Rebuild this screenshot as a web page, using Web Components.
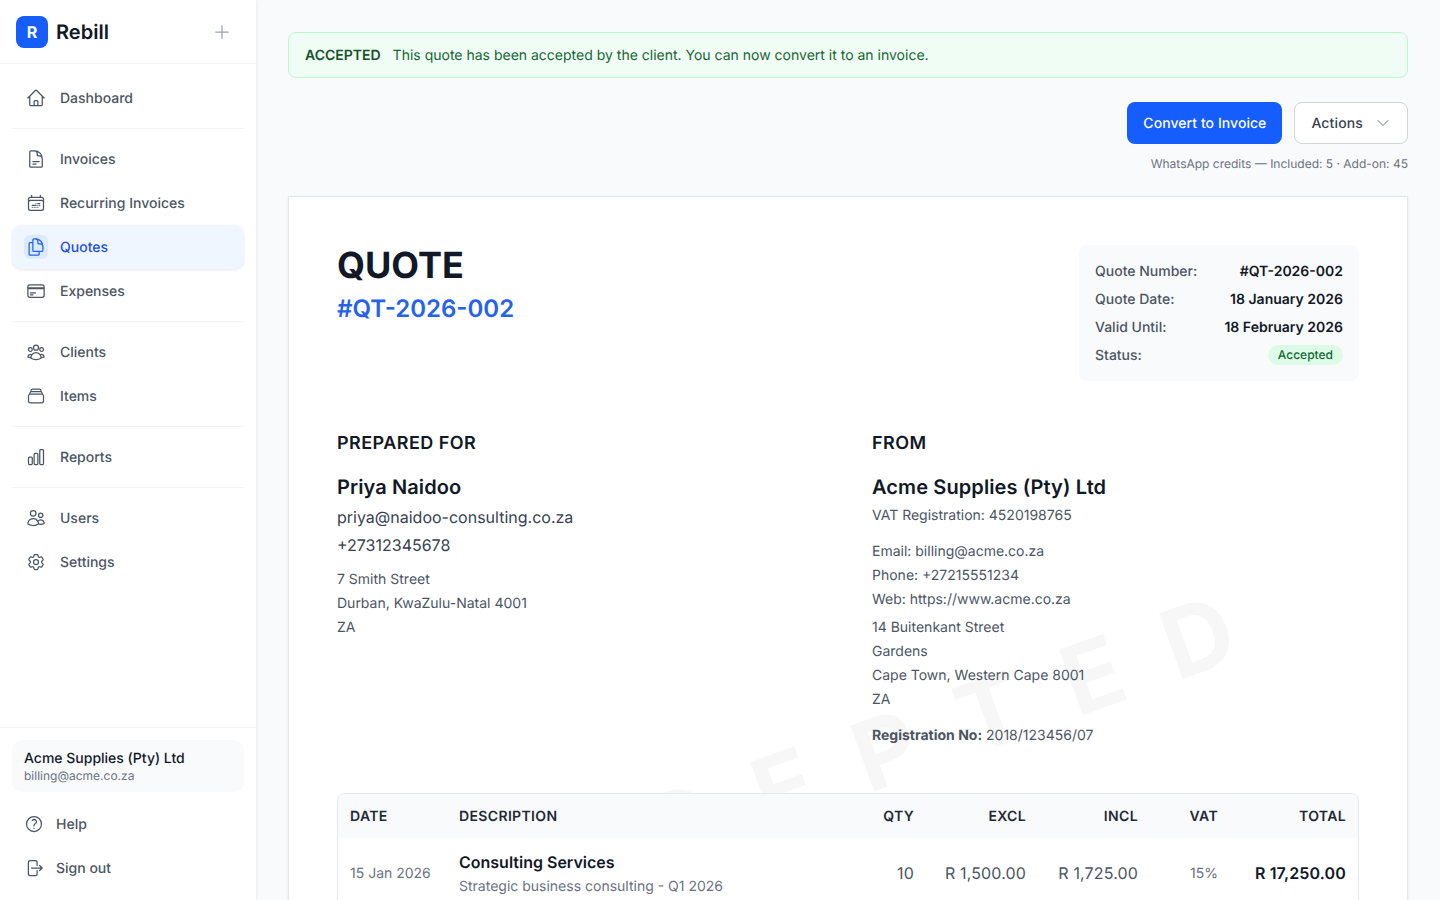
<!DOCTYPE html>
<html lang="en"><head><meta charset="utf-8"><title>Quote</title>
<style>
html,body{margin:0;height:100%;overflow:hidden;background:#f9fafb;font-family:Inter,"Liberation Sans",sans-serif;color:#111827;text-rendering:geometricPrecision;line-height:1.5}
</style></head><body>
<rb-app></rb-app>
<script>
const P={
home:"m2.25 12 8.954-8.955c.44-.439 1.152-.439 1.591 0L21.75 12M4.5 9.75v10.125c0 .621.504 1.125 1.125 1.125H9.75v-4.875c0-.621.504-1.125 1.125-1.125h2.25c.621 0 1.125.504 1.125 1.125V21h4.125c.621 0 1.125-.504 1.125-1.125V9.75M8.25 21h8.25",
doc:"M19.5 14.25v-2.625a3.375 3.375 0 0 0-3.375-3.375h-1.5A1.125 1.125 0 0 1 13.5 7.125v-1.5a3.375 3.375 0 0 0-3.375-3.375H8.25m0 12.75h7.5m-7.5 3H12M10.5 2.25H5.625c-.621 0-1.125.504-1.125 1.125v17.25c0 .621.504 1.125 1.125 1.125h12.75c.621 0 1.125-.504 1.125-1.125V11.25a9 9 0 0 0-9-9Z",
cal:"M6.75 2.994v2.25m10.5-2.25v2.25m-14.252 13.5V7.491a2.25 2.25 0 0 1 2.25-2.25h13.5a2.25 2.25 0 0 1 2.25 2.25v11.251m-18 0a2.25 2.25 0 0 0 2.25 2.25h13.5a2.25 2.25 0 0 0 2.25-2.25m-18 0v-7.5a2.25 2.25 0 0 1 2.25-2.25h13.5a2.25 2.25 0 0 1 2.25 2.25v7.5m-6.75-6h2.25m-9 2.25h4.5m.002-2.25h.005v.006H12v-.006Zm-.001 4.5h.006v.006h-.006v-.005Zm-2.25.001h.005v.006H9.75v-.006Zm-2.25 0h.005v.005h-.006v-.005Zm6.75-2.247h.005v.005h-.005v-.005Zm0 2.247h.006v.006h-.006v-.006Zm2.25-2.248h.006V15H16.5v-.005Z",
dup:"M15.75 17.25v3.375c0 .621-.504 1.125-1.125 1.125h-9.75a1.125 1.125 0 0 1-1.125-1.125V7.875c0-.621.504-1.125 1.125-1.125H6.75a9.06 9.06 0 0 1 1.5.124m7.5 10.376h3.375c.621 0 1.125-.504 1.125-1.125V11.25c0-4.46-3.243-8.161-7.5-8.876a9.06 9.06 0 0 0-1.5-.124H9.375c-.621 0-1.125.504-1.125 1.125v3.5m7.5 10.375H9.375a1.125 1.125 0 0 1-1.125-1.125v-9.25m12 6.625v-1.875a3.375 3.375 0 0 0-3.375-3.375h-1.5a1.125 1.125 0 0 1-1.125-1.125v-1.5a3.375 3.375 0 0 0-3.375-3.375H9.75",
card:"M2.25 8.25h19.5M2.25 9h19.5m-16.5 5.25h6m-6 2.25h3m-3.75 3h15a2.25 2.25 0 0 0 2.25-2.25V6.75A2.25 2.25 0 0 0 19.5 4.5h-15a2.25 2.25 0 0 0-2.25 2.25v10.5A2.25 2.25 0 0 0 4.5 19.5Z",
group:"M18 18.72a9.094 9.094 0 0 0 3.741-.479 3 3 0 0 0-4.682-2.72m.94 3.198.001.031c0 .225-.012.447-.037.666A11.944 11.944 0 0 1 12 21c-2.17 0-4.207-.576-5.963-1.584A6.062 6.062 0 0 1 6 18.719m12 0a5.971 5.971 0 0 0-.941-3.197m0 0A5.995 5.995 0 0 0 12 12.75a5.995 5.995 0 0 0-5.058 2.772m0 0a3 3 0 0 0-4.681 2.72 8.986 8.986 0 0 0 3.74.477m.94-3.197a5.971 5.971 0 0 0-.94 3.197M15 6.75a3 3 0 1 1-6 0 3 3 0 0 1 6 0Zm6 2.25a2.25 2.25 0 1 1-4.5 0 2.25 2.25 0 0 1 4.5 0Zm-13.5 0a2.25 2.25 0 1 1-4.5 0 2.25 2.25 0 0 1 4.5 0Z",
stack:"M6 6.878V6a2.25 2.25 0 0 1 2.25-2.25h7.5A2.25 2.25 0 0 1 18 6v.878m-12 0c.235-.083.487-.128.75-.128h10.5c.263 0 .515.045.75.128m-12 0A2.25 2.25 0 0 0 4.5 9v.878m13.5-3A2.25 2.25 0 0 1 19.5 9v.878m0 0a2.246 2.246 0 0 0-.75-.128H5.25c-.263 0-.515.045-.75.128m15 0A2.25 2.25 0 0 1 21 12v6a2.25 2.25 0 0 1-2.25 2.25H5.25A2.25 2.25 0 0 1 3 18v-6c0-.98.626-1.813 1.5-2.122",
chart:"M3 13.125C3 12.504 3.504 12 4.125 12h2.25c.621 0 1.125.504 1.125 1.125v6.75C7.5 20.496 6.996 21 6.375 21h-2.25A1.125 1.125 0 0 1 3 19.875v-6.75ZM9.75 8.625c0-.621.504-1.125 1.125-1.125h2.25c.621 0 1.125.504 1.125 1.125v11.25c0 .621-.504 1.125-1.125 1.125h-2.25a1.125 1.125 0 0 1-1.125-1.125V8.625ZM16.5 4.125c0-.621.504-1.125 1.125-1.125h2.25C20.496 3 21 3.504 21 4.125v15.75c0 .621-.504 1.125-1.125 1.125h-2.25a1.125 1.125 0 0 1-1.125-1.125V4.125Z",
users:"M15 19.128a9.38 9.38 0 0 0 2.625.372 9.337 9.337 0 0 0 4.121-.952 4.125 4.125 0 0 0-7.533-2.493M15 19.128v-.003c0-1.113-.285-2.16-.786-3.07M15 19.128v.106A12.318 12.318 0 0 1 8.624 21c-2.331 0-4.512-.645-6.374-1.766l-.001-.109a6.375 6.375 0 0 1 11.964-3.07M12 6.375a3.375 3.375 0 1 1-6.75 0 3.375 3.375 0 0 1 6.75 0Zm8.25 2.25a2.625 2.625 0 1 1-5.25 0 2.625 2.625 0 0 1 5.25 0Z",
cog:"M9.594 3.94c.09-.542.56-.94 1.11-.94h2.593c.55 0 1.02.398 1.11.94l.213 1.281c.063.374.313.686.645.87.074.04.147.083.22.127.325.196.72.257 1.075.124l1.217-.456a1.125 1.125 0 0 1 1.37.49l1.296 2.247a1.125 1.125 0 0 1-.26 1.431l-1.003.827c-.293.241-.438.613-.43.992a7.723 7.723 0 0 1 0 .255c-.008.378.137.75.43.991l1.004.827c.424.35.534.955.26 1.43l-1.298 2.247a1.125 1.125 0 0 1-1.369.491l-1.217-.456c-.355-.133-.75-.072-1.076.124a6.47 6.47 0 0 1-.22.128c-.331.183-.581.495-.644.869l-.213 1.281c-.09.543-.56.94-1.11.94h-2.594c-.55 0-1.019-.398-1.11-.94l-.213-1.281c-.062-.374-.312-.686-.644-.87a6.52 6.52 0 0 1-.22-.127c-.325-.196-.72-.257-1.076-.124l-1.217.456a1.125 1.125 0 0 1-1.369-.49l-1.297-2.247a1.125 1.125 0 0 1 .26-1.431l1.004-.827c.292-.24.437-.613.43-.991a6.932 6.932 0 0 1 0-.255c.007-.38-.138-.751-.43-.992l-1.004-.827a1.125 1.125 0 0 1-.26-1.43l1.297-2.247a1.125 1.125 0 0 1 1.37-.491l1.216.456c.356.133.751.072 1.076-.124.072-.044.146-.086.22-.128.332-.183.582-.495.644-.869l.214-1.28Z M15 12a3 3 0 1 1-6 0 3 3 0 0 1 6 0Z",
help:"M9.879 7.519c1.171-1.025 3.071-1.025 4.242 0 1.172 1.025 1.172 2.687 0 3.712-.203.179-.43.326-.67.442-.745.361-1.45.999-1.45 1.827v.75M21 12a9 9 0 1 1-18 0 9 9 0 0 1 18 0Zm-9 5.25h.008v.008H12v-.008Z",
out:"M15.75 9V5.25A2.25 2.25 0 0 0 13.5 3h-6a2.25 2.25 0 0 0-2.25 2.25v13.5A2.25 2.25 0 0 0 7.5 21h6a2.25 2.25 0 0 0 2.25-2.25V15m3 0 3-3m0 0-3-3m3 3H9",
plus:"M12 4.5v15m7.5-7.5h-15",
chev:"m19.5 8.25-7.5 7.5-7.5-7.5"};
const ico=(n,s=20,w=1.5)=>`<svg width="${s}" height="${s}" viewBox="0 0 24 24" fill="none" stroke="currentColor" stroke-width="${w}" stroke-linecap="round" stroke-linejoin="round" aria-hidden="true"><path d="${P[n]}"/></svg>`;
function def(tag,css,html){customElements.define(tag,class extends HTMLElement{
  connectedCallback(){if(this.shadowRoot)return;const r=this.attachShadow({mode:"open"});
  r.innerHTML=`<style>${css}</style>`+(typeof html==="function"?html(this):html);}
});}
def("rb-nav-item",`
:host{display:block}
a{display:flex;align-items:center;gap:12px;height:44px;padding:0 12px;border-radius:10px;font-size:14px;line-height:20px;font-weight:500;color:#4b5563;text-decoration:none}
.t{padding-top:2px}
.i{width:24px;height:24px;display:flex;align-items:center;justify-content:center;border-radius:6px;flex:none}
:host([active]) a{background:#eff6ff;color:#1d4ed8;box-shadow:0 1px 3px rgba(17,24,39,.1)}
:host([active]) .i{background:#dbeafe;color:#2563eb}
:host([compact]) .i{width:20px;height:20px}
`,h=>`<a href="#"><span class="i">${ico(h.getAttribute("icon"),20)}</span><span class="t"><slot></slot></span></a>`);
def("rb-sidebar",`
:host{display:flex;flex-direction:column;width:256px;height:900px;box-sizing:border-box;background:#fff;box-shadow:1px 0 3px rgba(17,24,39,.06);flex:none;position:relative;z-index:2}
.brand{height:63px;border-bottom:1px solid #f3f4f6;display:flex;align-items:center;padding:0 16px;gap:8px;flex:none}
.logo{width:32px;height:32px;border-radius:8px;background:#155dfc;color:#fff;font-weight:700;font-size:16px;display:flex;align-items:center;justify-content:center}
.name{font-size:20px;font-weight:600;color:#111827;flex:1;letter-spacing:.05px}
.plus{color:#9ca3af;display:flex;margin-right:8px}
nav{flex:1;padding:12px 12px 0}
hr{border:0;border-top:1px solid #f3f4f6;margin:8px 0}
.foot{border-top:1px solid #f3f4f6;padding:12px 12px 10px;flex:none}
.org{background:#f9fafb;border-radius:10px;height:52px;box-sizing:border-box;padding:0 12px;display:flex;flex-direction:column;justify-content:center;margin-bottom:10px}
.org b{font-size:14px;font-weight:500;color:#111827;line-height:20px;margin:1px 0 -1px}
.org span{font-size:12px;color:#6b7280;line-height:16px}
`,`<div class="brand"><div class="logo">R</div><div class="name">Rebill</div><span class="plus">${ico("plus",20)}</span></div>
<nav>
<rb-nav-item icon="home">Dashboard</rb-nav-item><hr>
<rb-nav-item icon="doc">Invoices</rb-nav-item>
<rb-nav-item icon="cal">Recurring Invoices</rb-nav-item>
<rb-nav-item icon="dup" active>Quotes</rb-nav-item>
<rb-nav-item icon="card">Expenses</rb-nav-item><hr>
<rb-nav-item icon="group">Clients</rb-nav-item>
<rb-nav-item icon="stack">Items</rb-nav-item><hr>
<rb-nav-item icon="chart">Reports</rb-nav-item><hr>
<rb-nav-item icon="users">Users</rb-nav-item>
<rb-nav-item icon="cog">Settings</rb-nav-item>
</nav>
<div class="foot"><div class="org"><b>Acme Supplies (Pty) Ltd</b><span>billing@acme.co.za</span></div>
<rb-nav-item icon="help" compact>Help</rb-nav-item>
<rb-nav-item icon="out" compact>Sign out</rb-nav-item></div>`);
def("rb-banner",`
:host{display:flex;align-items:center;height:46px;box-sizing:border-box;padding:0 16px;gap:12px;background:#f0fdf4;border:1px solid #bbf7d0;border-radius:8px;font-size:14px;line-height:20px;color:#166534}
b,span{padding-top:2px}
b{font-weight:600;color:#14532d}
`,`<b>ACCEPTED</b><span>This quote has been accepted by the client. You can now convert it to an invoice.</span>`);
def("rb-toolbar",`
:host{display:block;margin-top:24px}
.btns{display:flex;justify-content:flex-end;gap:12px}
button{height:42px;box-sizing:border-box;border-radius:8px;font:500 14px/20px Inter,"Liberation Sans",sans-serif;text-rendering:geometricPrecision;display:flex;align-items:center;cursor:pointer}
button span{padding-top:2px}
.p{background:#155dfc;color:#fff;border:0;padding:0 16px;letter-spacing:.06px}
.s{background:#fff;color:#374151;border:1px solid #d1d5db;padding:0 16px;gap:12px;letter-spacing:.14px}
.s svg{color:#6b7280}
p{margin:12px 0 0;text-align:right;font-size:12px;line-height:16px;color:#6b7280}
`,`<div class="btns"><button class="p"><span>Convert to Invoice</span></button><button class="s"><span>Actions</span> ${ico("chev",16)}</button></div><p>WhatsApp credits — Included: 5 · Add-on: 45</p>`);
def("rb-meta",`
:host{display:block;width:280px;height:136px;box-sizing:border-box;padding:12px 16px;background:#f9fafb;border-radius:8px;flex:none}
div{display:flex;justify-content:space-between;align-items:center;height:28px;font-size:14px;line-height:20px;color:#4b5563}
span{font-weight:500;padding-top:2px}
b{font-weight:600;color:#111827;padding-top:2px}
i{font-style:normal;font-size:12px;font-weight:500;color:#166534;background:#dcfce7;border-radius:999px;padding:0 10px;line-height:20px;height:20px}
`,`<div><span>Quote Number:</span><b>#QT-2026-002</b></div><div><span>Quote Date:</span><b>18 January 2026</b></div><div><span>Valid Until:</span><b>18 February 2026</b></div><div><span>Status:</span><i>Accepted</i></div>`);
def("rb-parties",`
:host{display:grid;grid-template-columns:1fr 1fr;gap:48px;margin-top:49px;position:relative}
h3{margin:0 0 15px;font-size:18px;font-weight:600;line-height:28px;color:#111827;letter-spacing:.45px}
h4{margin:0 0 2px;font-size:20px;font-weight:600;line-height:28px;color:#111827;letter-spacing:.1px}
.l{font-size:16px;line-height:28px;color:#374151}
.s{font-size:14px;line-height:24px;color:#4b5563}
.a{margin-top:9px}
.v{margin-top:3px}
.g{margin-top:12px}
.f{margin-top:4px}
.r{margin-top:12px}
.r b{font-weight:700}
`,`<div><h3>PREPARED FOR</h3><h4>Priya Naidoo</h4><div class="l">priya@naidoo-consulting.co.za</div><div class="l">+27312345678</div>
<div class="s a">7 Smith Street<br>Durban, KwaZulu-Natal 4001<br>ZA</div></div>
<div><h3>FROM</h3><h4>Acme Supplies (Pty) Ltd</h4><div class="s v">VAT Registration: 4520198765</div>
<div class="s g">Email: billing@acme.co.za<br>Phone: +27215551234<br>Web: https://www.acme.co.za</div>
<div class="s f">14 Buitenkant Street<br>Gardens<br>Cape Town, Western Cape 8001<br>ZA</div>
<div class="s r"><b>Registration No:</b> 2018/123456/07</div></div>`);
def("rb-items",`
:host{display:block;margin-top:45px;position:relative;background:#fff;border:1px solid #e5e7eb;border-radius:8px;overflow:hidden;font-size:14px;line-height:20px}
table{border-collapse:collapse;width:100%;table-layout:fixed}
th{height:44px;box-sizing:border-box;padding:2px 12px 0;background:#f9fafb;font-weight:600;color:#1f2937;text-align:left;letter-spacing:.35px;font-size:14px}
td{padding:12px;height:72px;box-sizing:border-box;color:#4b5563;vertical-align:middle}
.n{text-align:right}
.d b{display:block;font-size:16px;font-weight:600;color:#111827;line-height:24px}
.d span{display:block;font-size:14px;color:#6b7280;line-height:24px;margin:1px 0 -1px}
.v{font-size:16px;color:#4b5563;letter-spacing:.15px;padding-bottom:14px}
.t{font-size:16px;font-weight:600;color:#111827;letter-spacing:.15px;padding-bottom:14px}
.date{color:#6b7280}.vat{color:#6b7280}
`,`<table><colgroup><col style="width:109px"><col><col style="width:72px"><col style="width:112px"><col style="width:112px"><col style="width:80px"><col style="width:128px"></colgroup>
<thead><tr><th>DATE</th><th>DESCRIPTION</th><th class="n">QTY</th><th class="n">EXCL</th><th class="n">INCL</th><th class="n">VAT</th><th class="n">TOTAL</th></tr></thead>
<tbody><tr><td class="date">15 Jan 2026</td><td class="d"><b>Consulting Services</b><span>Strategic business consulting - Q1 2026</span></td><td class="n v">10</td><td class="n v">R 1,500.00</td><td class="n v">R 1,725.00</td><td class="n vat">15%</td><td class="n t">R 17,250.00</td></tr></tbody></table>`);
def("rb-quote",`
:host{display:block;position:relative;margin-top:24px;background:#fff;border:1px solid #e5e7eb;box-shadow:0 1px 3px rgba(17,24,39,.08);padding:48px;box-sizing:border-box;overflow:hidden;min-height:800px}
.wm{position:absolute;left:4px;right:0;top:519px;text-align:center;font-size:96px;font-weight:700;letter-spacing:48px;color:rgba(17,24,39,.035);transform:rotate(-20deg);white-space:nowrap;line-height:96px;pointer-events:none}
.head{display:flex;justify-content:space-between;align-items:flex-start;position:relative}
h1{margin:0;font-size:36px;font-weight:700;line-height:40px;color:#111827}
h2{margin:6px 0 0;font-size:24px;font-weight:600;line-height:36px;color:#2563eb}
rb-parties,rb-items{position:relative}
`,`<div class="wm">ACCEPTED</div><div class="head"><div><h1>QUOTE</h1><h2>#QT-2026-002</h2></div><rb-meta></rb-meta></div><rb-parties></rb-parties><rb-items></rb-items>`);
def("rb-app",`
:host{display:flex;height:900px;overflow:hidden}
main{flex:1;padding:32px;min-width:0;box-sizing:border-box;background:#f9fafb}
`,`<rb-sidebar></rb-sidebar><main><rb-banner></rb-banner><rb-toolbar></rb-toolbar><rb-quote></rb-quote></main>`);
</script></body></html>
